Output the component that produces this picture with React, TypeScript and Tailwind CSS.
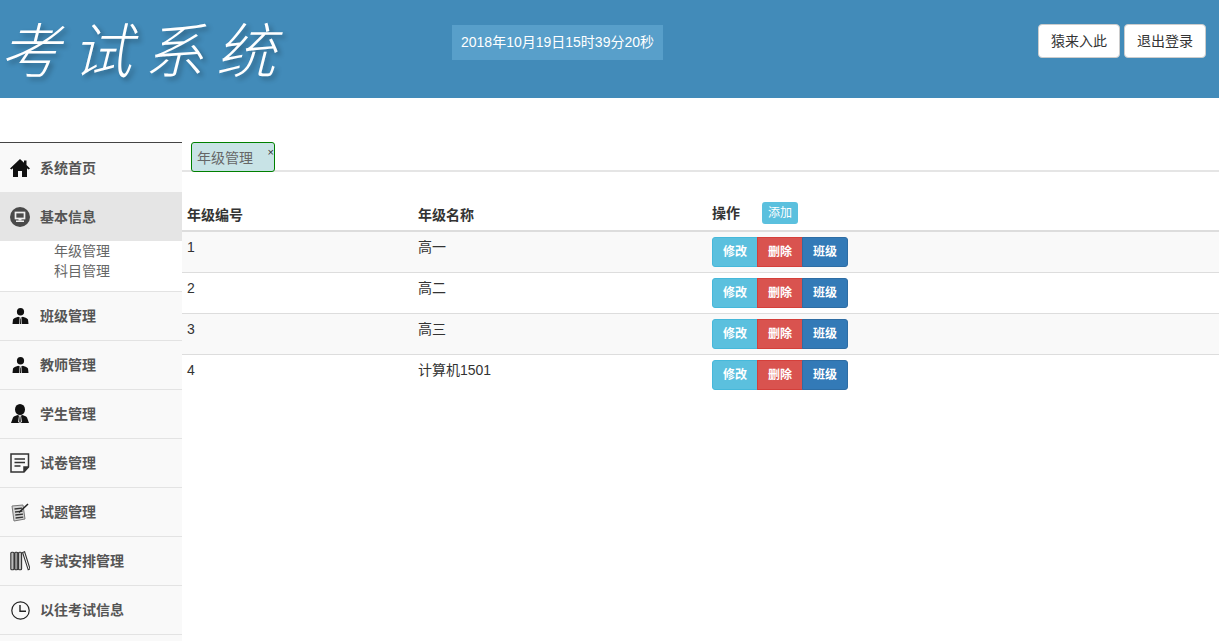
import React from "react";

const font = { fontFamily: '"Liberation Sans","Noto Sans CJK SC",sans-serif' };

function Home() {
  return (
    <svg width="20" height="20" viewBox="0 0 20 20" fill="#111">
      <path d="M10 1 L0 10.5 L1.5 11.5 L3 10.3 V19 H8 V13 H12 V19 H17 V10.3 L18.5 11.5 L20 10.5 L16.5 7 V2.5 H14 V4.7 Z" />
    </svg>
  );
}
function Monitor() {
  return (
    <svg width="20" height="20" viewBox="0 0 20 20">
      <circle cx="10" cy="10" r="10" fill="#4a4a4a" />
      <rect x="5.5" y="5.5" width="9" height="6" fill="none" stroke="#eee" strokeWidth="1.7" />
      <rect x="8.5" y="12" width="3" height="1.5" fill="#eee" />
      <rect x="6" y="13.5" width="8" height="1.5" fill="#eee" />
    </svg>
  );
}
function Person({ big }: { big?: boolean }) {
  if (big)
    return (
      <svg width="18" height="20" viewBox="0 0 18 20">
        <ellipse cx="9" cy="5.5" rx="5" ry="5.5" fill="#111" />
        <path d="M0 19 L2 13.5 C3 12 5 11.5 6.5 11 L9 12 L11.5 11 C13 11.5 15 12 16 13.5 L18 19 Z" fill="#111" />
        <path d="M8 11.5 H10 L11 18 L9 19 L7 18 Z" fill="#ddd" />
        <path d="M8.7 12.5 H9.3 L9.8 17.5 L9 18.2 L8.2 17.5 Z" fill="#111" />
      </svg>
    );
  return (
    <svg width="17" height="17" viewBox="0 0 17 17">
      <ellipse cx="8.5" cy="3.8" rx="3.6" ry="3.8" fill="#111" />
      <path d="M0.5 16 L1 11.5 C2 10 4.5 9.5 6.2 8.8 L8.5 10 L10.8 8.8 C12.5 9.5 15 10 16 11.5 L16.5 16 Z" fill="#111" />
      <path d="M7.5 10 H9.5 L9.8 16 H7.2 Z" fill="#ddd" />
      <path d="M8.2 10.5 H8.8 L9 16 H8 Z" fill="#111" />
    </svg>
  );
}
function Paper() {
  return (
    <svg width="20" height="20" viewBox="0 0 20 20" fill="none" stroke="#333" strokeWidth="1.5">
      <path d="M1 1 H18.5 V14 L14 19 H1 Z" />
      <path d="M18.5 14 H14 V19" fill="#333" />
      <path d="M4.5 6 H15 M4.5 9.5 H15 M4.5 13 H10.5" strokeWidth="1.3" />
    </svg>
  );
}
function Quiz() {
  return (
    <svg width="18" height="19" viewBox="0 0 18 19" fill="none">
      <path d="M1 3 L12 2 L14 16 L3 18 Z" fill="#d5d5d5" stroke="#777" />
      <path d="M3.5 6 L11 5.2 M4 9 L11.5 8.2 M4.3 12 L12 11.2 M4.6 15 L12.2 14.2" stroke="#333" strokeWidth="1.3" />
      <path d="M8 9.5 L17 1" stroke="#222" strokeWidth="1.5" />
    </svg>
  );
}
function Books() {
  return (
    <svg width="20" height="20" viewBox="0 0 20 20" fill="none" stroke="#333" strokeWidth="1.1">
      <rect x="0.8" y="1.2" width="3.2" height="17.6" rx="1" fill="#bbb" />
      <rect x="4.6" y="1.2" width="3.2" height="17.6" rx="1" fill="#999" />
      <rect x="8.4" y="1.2" width="3.2" height="17.6" rx="1" fill="#bbb" />
      <path d="M12.6 1.5 L14.6 0.8 L20 17.8 L18.2 18.8 Z" fill="#fff" />
    </svg>
  );
}
function Clock() {
  return (
    <svg width="19" height="19" viewBox="0 0 19 19" fill="none" stroke="#222" strokeWidth="1.2">
      <circle cx="9.5" cy="9.5" r="8.7" />
      <path d="M9 4 V10.2 H15" strokeWidth="1.4" />
    </svg>
  );
}

const nav: [React.ReactNode, string][] = [
  [<Person />, "班级管理"],
  [<Person />, "教师管理"],
  [<Person big />, "学生管理"],
  [<Paper />, "试卷管理"],
  [<Quiz />, "试题管理"],
  [<Books />, "考试安排管理"],
  [<Clock />, "以往考试信息"],
];

function NavRow({ icon, label, tone }: { icon: React.ReactNode; label: string; tone?: "plain" | "active" }) {
  const cls =
    tone === "active"
      ? "bg-[#e5e5e5] pt-[1px]"
      : tone === "plain"
        ? "pt-[1px]"
        : "border-b border-[#e3e3e3]";
  return (
    <div className={`flex h-[49px] items-center ${cls}`}>
      <div className="flex w-[40px] shrink-0 justify-center">{icon}</div>
      <span className="text-[14px] font-bold text-[#555]">{label}</span>
    </div>
  );
}

const rows = [
  ["1", "高一"],
  ["2", "高二"],
  ["3", "高三"],
  ["4", "计算机1501"],
];

export default function App() {
  return (
    <div className="h-[641px] w-[1219px] overflow-hidden bg-white text-[14px] text-[#333]" style={font}>
      <header className="flex h-[98px] items-center bg-[#428bb9]">
        <div className="w-[452px] shrink-0 pb-[4px]">
          <div className="whitespace-nowrap text-[60px] font-extralight italic leading-[70px] tracking-[12px] text-white [font-family:'Noto_Sans_CJK_SC',sans-serif] [text-shadow:3px_3px_5px_rgba(0,0,0,0.3)]">
            考试系统
          </div>
        </div>
        <div className="mb-[14px] flex h-[35px] w-[211px] items-center justify-center bg-[#589fca] text-[14px] text-white">
          2018年10月19日15时39分20秒
        </div>
        <div className="mb-[16px] ml-auto flex gap-[4px] pr-[13px]">
          <button className="h-[34px] w-[82px] rounded-[4px] border border-[#ccc] bg-white text-[14px] text-[#333]">猿来入此</button>
          <button className="h-[34px] w-[82px] rounded-[4px] border border-[#ccc] bg-white text-[14px] text-[#333]">退出登录</button>
        </div>
      </header>

      <div className="mt-[44px] flex">
        <aside className="h-[499px] w-[182px] shrink-0 border-t border-[#444] bg-[#f9f9f9]">
          <NavRow icon={<Home />} label="系统首页" tone="plain" />
          <NavRow icon={<Monitor />} label="基本信息" tone="active" />
          <div className="flex h-[51px] flex-col border-b border-[#e3e3e3] bg-white pl-[54px] leading-[20px] text-[#666]">
            <span>年级管理</span>
            <span>科目管理</span>
          </div>
          {nav.map(([icon, label]) => (
            <NavRow key={label} icon={icon} label={label} />
          ))}
        </aside>

        <main className="min-w-0 flex-1">
          <div className="h-[30px] border-b-2 border-[#e5e5e5] pl-[9px]">
            <div className="relative h-[30px] w-[84px] rounded-[3px] border border-[#008000] bg-[#c8e3e6] pl-[5px] pt-[5px] text-[#666]">
              年级管理
              <span className="absolute right-[0px] top-[1px] text-[11px] leading-[16px] text-[#333]">×</span>
            </div>
          </div>

          <table className="mt-[29px] w-full table-fixed border-collapse text-left">
            <colgroup>
              <col className="w-[231px]" />
              <col className="w-[294px]" />
              <col />
            </colgroup>
            <thead>
              <tr className="h-[30px] border-b-2 border-[#ddd]">
                <th className="px-[5px] align-middle font-bold">年级编号</th>
                <th className="px-[5px] align-middle font-bold">年级名称</th>
                <th className="px-[5px] align-top font-bold">
                  <div className="flex items-center pt-[1px]">
                    <span>操作</span>
                    <span className="ml-[22px] flex h-[22px] w-[36px] items-center justify-center rounded-[3px] bg-[#5bc0de] text-[12px] font-normal text-white">添加</span>
                  </div>
                </th>
              </tr>
            </thead>
            <tbody>
              {rows.map((r, i) => (
                <tr key={r[0]} className={`h-[41px] border-t border-[#ddd] first:border-t-0 ${i % 2 === 0 ? "bg-[#f9f9f9]" : "bg-white"}`}>
                  <td className="px-[5px] pt-[5px] align-top leading-[20px]">{r[0]}</td>
                  <td className="px-[5px] pt-[5px] align-top leading-[20px]">{r[1]}</td>
                  <td className="px-[5px] pt-[5px] align-top">
                    <div className="flex h-[30px] w-[136px] text-[12px] font-bold text-white">
                      <span className="flex w-[46px] items-center justify-center rounded-l-[3px] border border-[#46b8da] bg-[#5bc0de]">修改</span>
                      <span className="-ml-px flex w-[46px] items-center justify-center border border-[#d43f3a] bg-[#d9534f]">删除</span>
                      <span className="-ml-px flex w-[46px] items-center justify-center rounded-r-[3px] border border-[#2e6da4] bg-[#337ab7]">班级</span>
                    </div>
                  </td>
                </tr>
              ))}
            </tbody>
          </table>
        </main>
      </div>
    </div>
  );
}
